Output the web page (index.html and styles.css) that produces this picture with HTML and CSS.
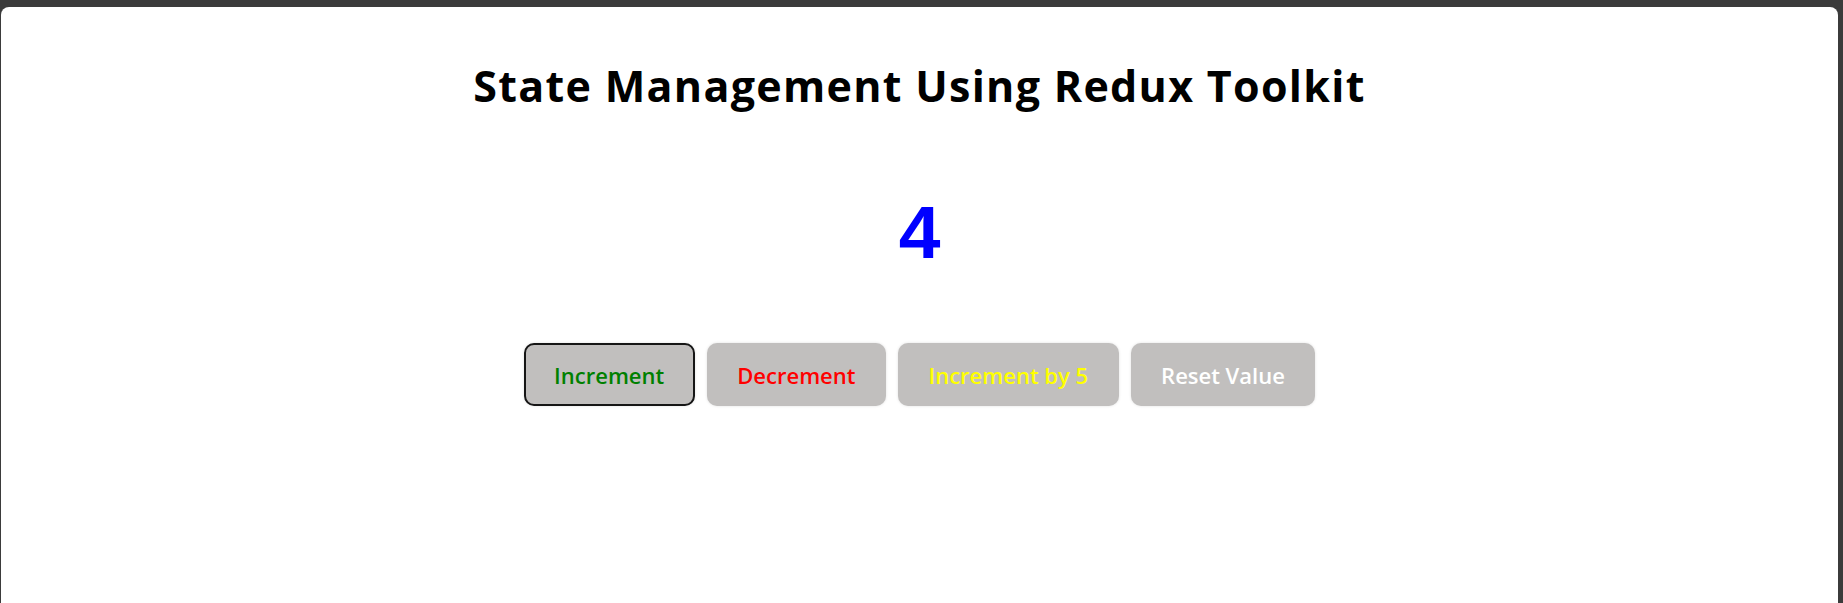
FILE: index.html
```html
<!DOCTYPE html>
<html lang="en">
<head>
<meta charset="utf-8">
<title>Redux Toolkit Counter</title>
<link rel="stylesheet" href="styles.css">
</head>
<body>
<div class="panel">
  <h1 class="title">State Management Using Redux Toolkit</h1>
  <div class="count">4</div>
  <div class="actions">
    <button class="btn btn-inc is-focused">Increment</button>
    <button class="btn btn-dec">Decrement</button>
    <button class="btn btn-inc5">Increment by 5</button>
    <button class="btn btn-reset">Reset Value</button>
  </div>
</div>
</body>
</html>
```

FILE: styles.css
```css
html, body {
  margin: 0;
  padding: 0;
  height: 100%;
}
body {
  background: #3b3b3b;
  padding: 7px 5px 0 1px;
  box-sizing: border-box;
  overflow: hidden;
  font-family: "Open Sans", "Noto Sans", sans-serif;
}
.panel {
  background: #ffffff;
  height: 100%;
  border-radius: 8px 8px 0 0;
  display: flex;
  flex-direction: column;
  align-items: center;
}
.title {
  margin: 54px 0 0 0;
  font-size: 43px;
  line-height: 50px;
  font-weight: 700;
  color: #000;
  letter-spacing: 1.3px;
}
.count {
  margin-top: 81px;
  font-family: "Liberation Sans", Arial, sans-serif;
  font-weight: 700;
  font-size: 75px;
  line-height: 80px;
  color: #0000ff;
}
.actions {
  margin-top: 71px;
  display: flex;
  gap: 12px;
}
.btn {
  height: 63px;
  padding: 0 28.5px;
  border: 2px solid transparent;
  border-radius: 10px;
  background: #c1bfbe;
  font-family: "Open Sans", "Noto Sans", sans-serif;
  font-size: 22px;
  font-weight: 600;
  box-shadow: 0 0 3px rgba(0, 0, 0, 0.12);
  cursor: pointer;
}
.is-focused {
  border: 2.5px solid #161616;
}
.btn-inc { color: #008000; }
.btn-dec { color: #ff0000; }
.btn-inc5 { color: #ffff00; }
.btn-reset { color: #ffffff; }
```
